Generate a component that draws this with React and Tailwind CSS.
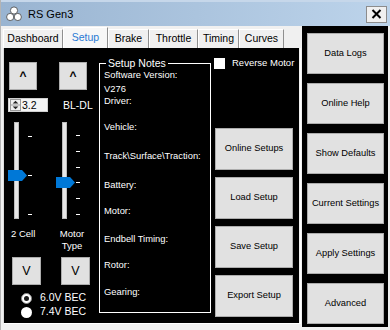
import React from "react";

const tabs = [
  { label: "Dashboard", w: "w-[60px]" },
  { label: "Setup", w: "w-[45px]", active: true },
  { label: "Brake", w: "w-[41px]" },
  { label: "Throttle", w: "w-[49px]" },
  { label: "Timing", w: "w-[41px]" },
  { label: "Curves", w: "w-[45px]" },
];

const notes = [
  { text: "Software Version:", mt: "mt-0" },
  { text: "V276", mt: "mt-[2px]" },
  { text: "Driver:", mt: "mt-0" },
  { text: "Vehicle:", mt: "mt-[14px]" },
  { text: "Track\\Surface\\Traction:", mt: "mt-[17px]" },
  { text: "Battery:", mt: "mt-[17px]" },
  { text: "Motor:", mt: "mt-[14px]" },
  { text: "Endbell Timing:", mt: "mt-[16px]" },
  { text: "Rotor:", mt: "mt-[14px]" },
  { text: "Gearing:", mt: "mt-[15px]" },
];

const sideButtons = ["Data Logs", "Online Help", "Show Defaults", "Current Settings", "Apply Settings", "Advanced"];
const setupButtons = ["Online Setups", "Load Setup", "Save Setup", "Export Setup"];

function WinButton({ children, className }) {
  return (
    <button className={"flex items-center justify-center bg-[#e1e1e1] border border-[#adadad] text-black " + className}>
      {children}
    </button>
  );
}

// vertical trackbar, ticks given as y offsets
function Trackbar({ ticks, thumb }) {
  return (
    <svg width="26" height="101" viewBox="0 0 26 101">
      <rect x="7.5" y="2.5" width="4" height="96" fill="#e7e7e7" stroke="#bcbcbc" />
      {ticks.map((t) => (
        <rect key={t} x="21" y={t} width="4" height="1" fill="#ffffff" />
      ))}
      <polygon
        points={`1,${thumb - 5.5} 15,${thumb - 5.5} 20,${thumb} 15,${thumb + 5.5} 1,${thumb + 5.5}`}
        fill="#0078d7"
      />
    </svg>
  );
}

export default function App() {
  return (
    <div className="w-[390px] h-[330px] bg-[#f0f0f0] flex flex-col font-['Liberation_Sans',Arial,sans-serif] overflow-hidden border-l border-[#b4b4b4]">
      {/* title bar */}
      <div className="h-[26px] flex items-center bg-linear-to-r from-[#99b4d1] to-[#bdd4eb] pl-[5px] border-t-2 border-[#c6d7ea]">
        <svg width="16" height="16" viewBox="0 0 16 16">
          <circle cx="8" cy="4.5" r="3.6" fill="#fff" stroke="#555" strokeWidth="0.9" />
          <circle cx="4.2" cy="11" r="3.6" fill="#fff" stroke="#555" strokeWidth="0.9" />
          <circle cx="11.8" cy="11" r="3.6" fill="#fff" stroke="#555" strokeWidth="0.9" />
        </svg>
        <span className="ml-[6px] text-[11px] text-black">RS Gen3</span>
        <div className="ml-auto mr-[3px] w-[21px] h-[17px] bg-[#f0f0f0] border border-[#8c8c8c] flex items-center justify-center">
          <svg width="11" height="10" viewBox="0 0 11 10">
            <path d="M1.5 1 L9.5 9 M9.5 1 L1.5 9" stroke="#000" strokeWidth="2" />
          </svg>
        </div>
      </div>

      <div className="flex flex-1">
        {/* tab control */}
        <div className="w-[301px] flex flex-col">
          <div className="h-[22px] flex items-end pl-[2px] pt-[1px]">
            {tabs.map((t) =>
              t.active ? (
                <div
                  key={t.label}
                  className={t.w + " h-[21px] flex items-start justify-center pt-[2px] bg-[#f7f7f7] border-t border-l border-white border-r border-r-[#8f8f8f] text-[10.5px] text-[#2a7ad4]"}
                >
                  {t.label}
                </div>
              ) : (
                <div
                  key={t.label}
                  className={t.w + " h-[19px] flex items-center justify-center bg-[#f0f0f0] border-t border-l border-white border-r border-r-[#8f8f8f] text-[10.5px] text-black"}
                >
                  {t.label}
                </div>
              )
            )}
          </div>
          <div className="ml-[2px] w-[298px] h-[276px] border-l border-[#dcdcdc] border-r border-r-white border-b border-b-white">
            <div className="w-[295px] h-[275px] bg-black flex text-white">
              {/* left controls */}
              <div className="w-[92px] flex flex-col">
                <div className="flex mt-[14px]">
                  <WinButton className="ml-[5px] w-[28px] h-[28px] text-[12px] font-bold">^</WinButton>
                  <WinButton className="ml-[22px] w-[28px] h-[28px] text-[12px] font-bold">^</WinButton>
                </div>
                <div className="flex items-center mt-[7px]">
                  <div className="ml-[4px] w-[40px] h-[14px] bg-[#f4f4f4] border border-[#d0d0d0] flex items-center">
                    <svg width="11" height="12" viewBox="0 0 11 12" className="ml-[1px]">
                      <rect x="0.5" y="0.5" width="10" height="11" fill="#f0f0f0" stroke="#9a9a9a" />
                      <line x1="1" y1="6" x2="10" y2="6" stroke="#9a9a9a" />
                      <polygon points="5.5,1.8 8.3,4.6 2.7,4.6" fill="#222" />
                      <polygon points="5.5,10.2 8.3,7.4 2.7,7.4" fill="#222" />
                    </svg>
                    <span className="ml-[1px] text-[10.5px] text-black leading-[12px]">3.2</span>
                  </div>
                  <span className="ml-[15px] text-[10.5px] leading-[14px] mt-[1px]">BL-DL</span>
                </div>
                <div className="flex mt-[8px]">
                  <div className="ml-[3px]">
                    <Trackbar ticks={[16, 55, 94]} thumb={55.5} />
                  </div>
                  <div className="ml-[22px]">
                    <Trackbar ticks={[15, 31, 47, 62, 78, 94]} thumb={62.5} />
                  </div>
                </div>
                <div className="flex mt-[7px] text-[9.5px] leading-[12px]">
                  <div className="w-[50px] pl-[7px]">2 Cell</div>
                  <div className="w-[36px] text-center">
                    Motor
                    <br />
                    Type
                  </div>
                </div>
                <div className="flex mt-[5px]">
                  <WinButton className="ml-[8px] w-[29px] h-[28px] text-[12.5px]">V</WinButton>
                  <WinButton className="ml-[20px] w-[29px] h-[28px] text-[12.5px]">V</WinButton>
                </div>
                <div className="flex flex-col mt-[6px] text-[10.5px]">
                  <div className="h-[14px] flex items-center">
                    <div className="ml-[17px] w-[11px] h-[11px] rounded-full bg-white border border-[#8a8a8a] flex items-center justify-center">
                      <div className="w-[5px] h-[5px] rounded-full bg-[#1a1a1a]" />
                    </div>
                    <span className="ml-[8px]">6.0V BEC</span>
                  </div>
                  <div className="h-[14px] flex items-center">
                    <div className="ml-[17px] w-[11px] h-[11px] rounded-full bg-white" />
                    <span className="ml-[8px]">7.4V BEC</span>
                  </div>
                </div>
              </div>

              {/* setup notes */}
              <fieldset className="ml-[3px] mt-[9px] w-[112px] h-[256px] border border-white">
                <legend className="ml-[6px] px-[2px] text-[10.5px] leading-[12px]">Setup Notes</legend>
                <div className="flex flex-col pl-[4px] text-[9.4px] leading-[12px]">
                  {notes.map((n) => (
                    <div key={n.text} className={n.mt + " whitespace-nowrap"}>
                      {n.text}
                    </div>
                  ))}
                </div>
              </fieldset>

              {/* right column */}
              <div className="w-[88px] flex flex-col">
                <div className="flex items-center mt-[9px]">
                  <div className="ml-[3px] w-[11px] h-[11px] bg-white" />
                  <span className="ml-[7px] text-[9.5px] leading-[12px]">Reverse Motor</span>
                </div>
                <div className="flex flex-col gap-[7px] mt-[59px] ml-[4px]">
                  {setupButtons.map((b) => (
                    <WinButton key={b} className="w-[78px] h-[42px] text-[9.3px]">
                      {b}
                    </WinButton>
                  ))}
                </div>
              </div>
            </div>
          </div>
        </div>

        {/* side panel */}
        <div className="w-[86px] h-[301px] bg-black flex flex-col gap-[9px] pt-[7px] pl-[5px]">
          {sideButtons.map((b) => (
            <WinButton key={b} className="w-[77px] h-[41px] text-[9.3px]">
              {b}
            </WinButton>
          ))}
        </div>
      </div>
    </div>
  );
}
